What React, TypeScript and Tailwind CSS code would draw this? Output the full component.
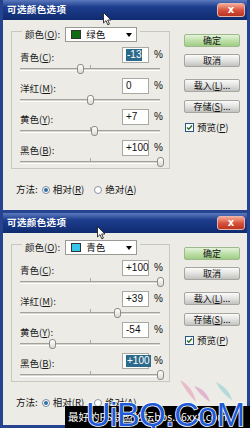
import React from "react";

const CJK = "font-['Noto_Sans_CJK_SC','Noto_Sans',sans-serif]";
const LAT = "font-['Liberation_Sans','Noto_Sans_CJK_SC',sans-serif]";

type Row = { label: string; key: string; value: number; text: string; selected?: boolean };

function Label({ name, k }: { name: string; k: string }) {
  return (
    <span className={`${CJK} text-[9.5px] leading-none text-[#1a1a1a]`}>
      {name}(<span className="underline underline-offset-1">{k}</span>):
    </span>
  );
}

function Slider({ value }: { value: number }) {
  const x = ((value + 100) / 200) * 140;
  return (
    <div className="relative mt-px h-[10px] w-[140px]">
      <div className="absolute left-0 right-0 top-[4px] h-[3px] border-t border-b border-t-[#a3a39c] border-b-white bg-[#d6d5cf]" />
      <div className="absolute left-[70px] top-[1px] h-[3px] w-px bg-[#a8a8a0]" />
      <div
        className="absolute top-0 h-[10px] w-[7px] rounded-[3px] border border-[#8d8d86] bg-gradient-to-b from-white to-[#dcdcd4]"
        style={{ left: x - 3.5 }}
      />
    </div>
  );
}

function Button({ children, primary }: { children: React.ReactNode; primary?: boolean }) {
  return (
    <div
      className={`flex h-[13px] w-[56px] items-center justify-center rounded-[2px] border ${CJK} text-[9px] leading-none text-[#111] ${
        primary
          ? "border-[#9db98d] bg-gradient-to-b from-[#e4f3da] via-[#bfe0aa] to-[#9fcd84]"
          : "border-[#a6a6a0] bg-gradient-to-b from-[#fbfbfb] via-[#e2e2e0] to-[#c2c2c0]"
      }`}
    >
      {children}
    </div>
  );
}

function Dialog({
  swatch,
  colorName,
  rows,
  height,
}: {
  swatch: string;
  colorName: string;
  rows: Row[];
  height: number;
}) {
  return (
    <div
      className="flex flex-col border-x-[3px] border-b-[3px] border-[#25438f] bg-[#ecebe6]"
      style={{ height }}
    >
      <div className="flex h-[20px] shrink-0 items-center justify-between bg-gradient-to-b from-[#5c79bd] via-[#1d3d8d] via-35% to-[#0f2b70] pl-[4px] pr-[2px]">
        <span className={`${CJK} text-[9.5px] font-bold leading-none tracking-[0.4px] text-white`}>
          可选颜色选项
        </span>
        <div className="flex h-[14px] w-[28px] items-center justify-center rounded-[3px] border border-[#e8b5a8] bg-gradient-to-b from-[#f2a795] via-[#d9533e] to-[#b93520]">
          <span className="font-['DejaVu_Sans',sans-serif] text-[10px] font-bold leading-none text-white">x</span>
        </div>
      </div>
      <div className="flex flex-1 flex-col">
        <div className="flex pl-[8px] pt-[11px]">
          <div className="relative w-[159px] border border-[#c9c8bf] pb-px pl-[8px] pr-[6px] pt-[15px]">
            <div className="absolute left-[10px] top-[-5px] flex items-center gap-[5px] bg-[#ecebe6] px-[3px]">
              <Label name="颜色" k="O" />
              <div className="flex h-[15px] w-[72px] items-center border border-[#9a9a94] bg-white pl-[5px] pr-[4px]">
                <div className="h-[9px] w-[10px] border border-[#333]" style={{ background: swatch }} />
                <span className={`${CJK} ml-[5px] flex-1 text-[9.5px] leading-none text-[#111]`}>{colorName}</span>
                <span className="h-0 w-0 border-x-[3px] border-t-[4px] border-x-transparent border-t-black" />
              </div>
            </div>
            <div className="flex flex-col gap-[4px]">
              {rows.map((r) => (
                <div key={r.key} className="flex flex-col">
                  <div className="flex h-[16px] items-center">
                    <div className="flex-1">
                      <Label name={r.label} k={r.key} />
                    </div>
                    <div className="flex h-[16px] w-[27px] items-center border border-[#a9a9a3] bg-white pl-[3px]">
                      <span
                        className={`${LAT} text-[10px] leading-[12px] ${
                          r.selected ? "bg-[#2c6a8c] px-px text-white" : "text-[#111]"
                        }`}
                      >
                        {r.text}
                      </span>
                    </div>
                    <span className={`${LAT} ml-[5px] w-[9px] text-[10px] leading-none text-[#111]`}>%</span>
                  </div>
                  <Slider value={r.value} />
                </div>
              ))}
            </div>
          </div>
          <div className="ml-[14px] mt-[3px] flex flex-col">
            <Button primary>确定</Button>
            <div className="mt-[7px]">
              <Button>取消</Button>
            </div>
            <div className="mt-[12px]">
              <Button>
                载入(<span className="underline underline-offset-1">L</span>)...
              </Button>
            </div>
            <div className="mt-[8px]">
              <Button>
                存储(<span className="underline underline-offset-1">S</span>)...
              </Button>
            </div>
            <div className="ml-px mt-[10px] flex items-center gap-[3px]">
              <div className="flex h-[9px] w-[9px] items-center justify-center border border-[#2a5686] bg-white">
                <svg width="7" height="7" viewBox="0 0 7 7">
                  <path d="M1 3.5 L2.8 5.3 L6 1.5" fill="none" stroke="#2c6a2c" strokeWidth="1.4" />
                </svg>
              </div>
              <span className={`${CJK} text-[9.5px] leading-none text-[#111]`}>
                预览(<span className="underline underline-offset-1">P</span>)
              </span>
            </div>
          </div>
        </div>
        <div className="ml-[13px] mt-[15px] flex h-[12px] items-center">
          <span className={`${CJK} text-[9.5px] leading-none text-[#111]`}>方法:</span>
          <div className="ml-[4px] flex h-[8px] w-[8px] items-center justify-center rounded-full border border-[#7a8aa0] bg-white">
            <div className="h-[4px] w-[4px] rounded-full bg-[#2f6fa6]" />
          </div>
          <span className={`${CJK} ml-[3px] text-[9.5px] leading-none text-[#111]`}>
            相对(<span className="underline underline-offset-1">R</span>)
          </span>
          <div className="ml-[10px] h-[8px] w-[8px] rounded-full border border-[#8a94a4] bg-white" />
          <span className={`${CJK} ml-[3px] text-[9.5px] leading-none text-[#111]`}>
            绝对(<span className="underline underline-offset-1">A</span>)
          </span>
        </div>
      </div>
    </div>
  );
}

function Cursor({ x, y }: { x: number; y: number }) {
  return (
    <svg className="absolute" style={{ left: x, top: y }} width="9" height="14" viewBox="0 0 9 14">
      <path d="M0.5 0.5 L0.5 11 L3 8.6 L4.8 12.8 L6.4 12.1 L4.7 8 L8 8 Z" fill="white" stroke="#222" strokeWidth="0.9" />
    </svg>
  );
}

export default function App() {
  const rows1: Row[] = [
    { label: "青色", key: "C", value: -13, text: "-13", selected: true },
    { label: "洋红", key: "M", value: 0, text: "0" },
    { label: "黄色", key: "Y", value: 7, text: "+7" },
    { label: "黑色", key: "B", value: 100, text: "+100" },
  ];
  const rows2: Row[] = [
    { label: "青色", key: "C", value: 100, text: "+100" },
    { label: "洋红", key: "M", value: 39, text: "+39" },
    { label: "黄色", key: "Y", value: -54, text: "-54" },
    { label: "黑色", key: "B", value: 100, text: "+100", selected: true },
  ];
  return (
    <div className="relative flex h-[428px] w-[250px] flex-col overflow-hidden bg-[#25438f]">
      <Dialog swatch="#0d6b12" colorName="绿色" rows={rows1} height={213} />
      <Dialog swatch="#35c6ea" colorName="青色" rows={rows2} height={215} />
      <Cursor x={103} y={12} />
      <Cursor x={97} y={226} />
      <svg className="absolute left-[172px] top-[378px] opacity-50" width="70" height="28" viewBox="0 0 70 28">
        <path d="M8 2 C16 6 22 14 24 24 C18 18 12 10 8 2 Z" fill="#e88fb0" />
        <path d="M22 8 C30 10 36 16 38 24 C32 20 26 14 22 8 Z" fill="#d97fc0" />
        <path d="M44 4 C52 8 58 14 60 22 C54 18 48 12 44 4 Z" fill="#7fc9c9" />
      </svg>
      <div className="absolute left-[65px] top-[406px] flex h-[22px] w-[185px] items-center bg-black pl-[3px]">
        <span className={`${CJK} whitespace-nowrap text-[10.5px] leading-none text-white`}>
          最好的PS联盟论坛bbs.16xx8.com
        </span>
      </div>
      <div className="absolute left-[86px] top-[397px] font-['Liberation_Sans',sans-serif] text-[34px] leading-none tracking-[-0.5px] text-[#1f5bd8] [-webkit-text-stroke:1.5px_white] [paint-order:stroke_fill]">
        UiBQ.CoM
      </div>
    </div>
  );
}
